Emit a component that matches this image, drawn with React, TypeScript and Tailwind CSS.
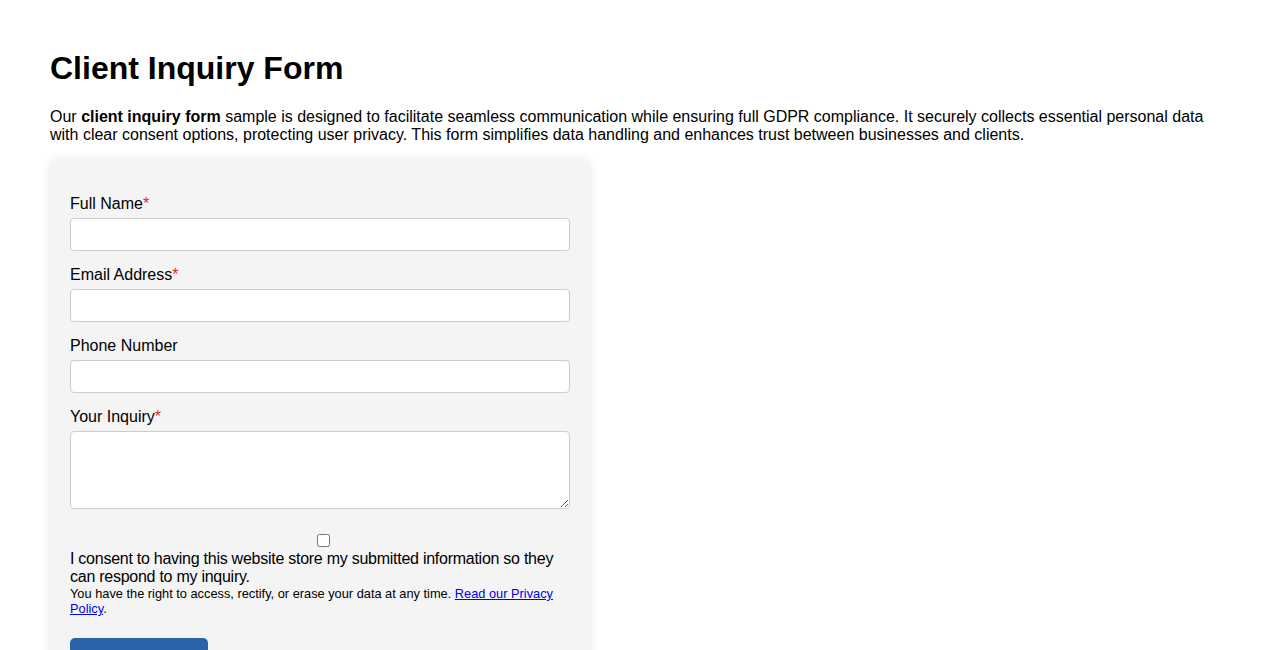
import React from "react";

export default function App() {
  const font = { fontFamily: '"Liberation Sans", Arial, sans-serif' };
  return (
    <div className="bg-white min-h-screen text-black px-[50px] pt-[50px]" style={font}>
      <h1 className="text-[32px] leading-[37px] font-bold mb-[21px]">Client Inquiry Form</h1>
      <p className="text-[16px] leading-[18px] mb-[16px]">
        Our <strong>client inquiry form</strong> sample is designed to facilitate seamless communication while ensuring full GDPR compliance. It securely collects essential personal data with clear consent options, protecting user privacy. This form simplifies data handling and enhances trust between businesses and clients.
      </p>
      <form
        className="w-[540px] bg-[#f4f4f4] rounded-[8px] shadow-[0_0_10px_rgba(0,0,0,0.1)] px-[20px] pt-[35px] pb-[20px]"
        onSubmit={(e) => e.preventDefault()}
      >
        {[
          { label: "Full Name", req: true },
          { label: "Email Address", req: true },
          { label: "Phone Number", req: false },
        ].map((f) => (
          <div key={f.label} className="mb-[15px]">
            <label className="block text-[16px] leading-[18px] mb-[5px]">
              {f.label}
              {f.req && <span className="text-[#e0252b]">*</span>}
            </label>
            <input
              type="text"
              className="block w-full h-[33px] bg-white border border-[#cccccc] rounded-[4px]"
            />
          </div>
        ))}
        <div className="mb-[25px]">
          <label className="block text-[16px] leading-[18px] mb-[5px]">
            Your Inquiry<span className="text-[#e0252b]">*</span>
          </label>
          <textarea className="block w-full h-[78px] bg-white border border-[#cccccc] rounded-[4px] resize-y" />
        </div>
        <div className="flex justify-center pl-[7px] h-[13px]">
          <input type="checkbox" className="w-[13px] h-[13px] m-0" />
        </div>
        <p className="text-[16px] leading-[18px] mt-[3px] tracking-[-0.26px]">
          I consent to having this website store my submitted information so they can respond to my inquiry.
        </p>
        <p className="text-[12.8px] leading-[15px]">
          You have the right to access, rectify, or erase your data at any time.{" "}
          <a href="#" className="text-[#0000ee] underline">Read our Privacy Policy</a>.
        </p>
        <button
          type="submit"
          className="mt-[22px] w-[138px] h-[40px] bg-[#2c62a8] text-white rounded-[5px] text-[16px]"
        >
          Submit Inquiry
        </button>
      </form>
    </div>
  );
}
